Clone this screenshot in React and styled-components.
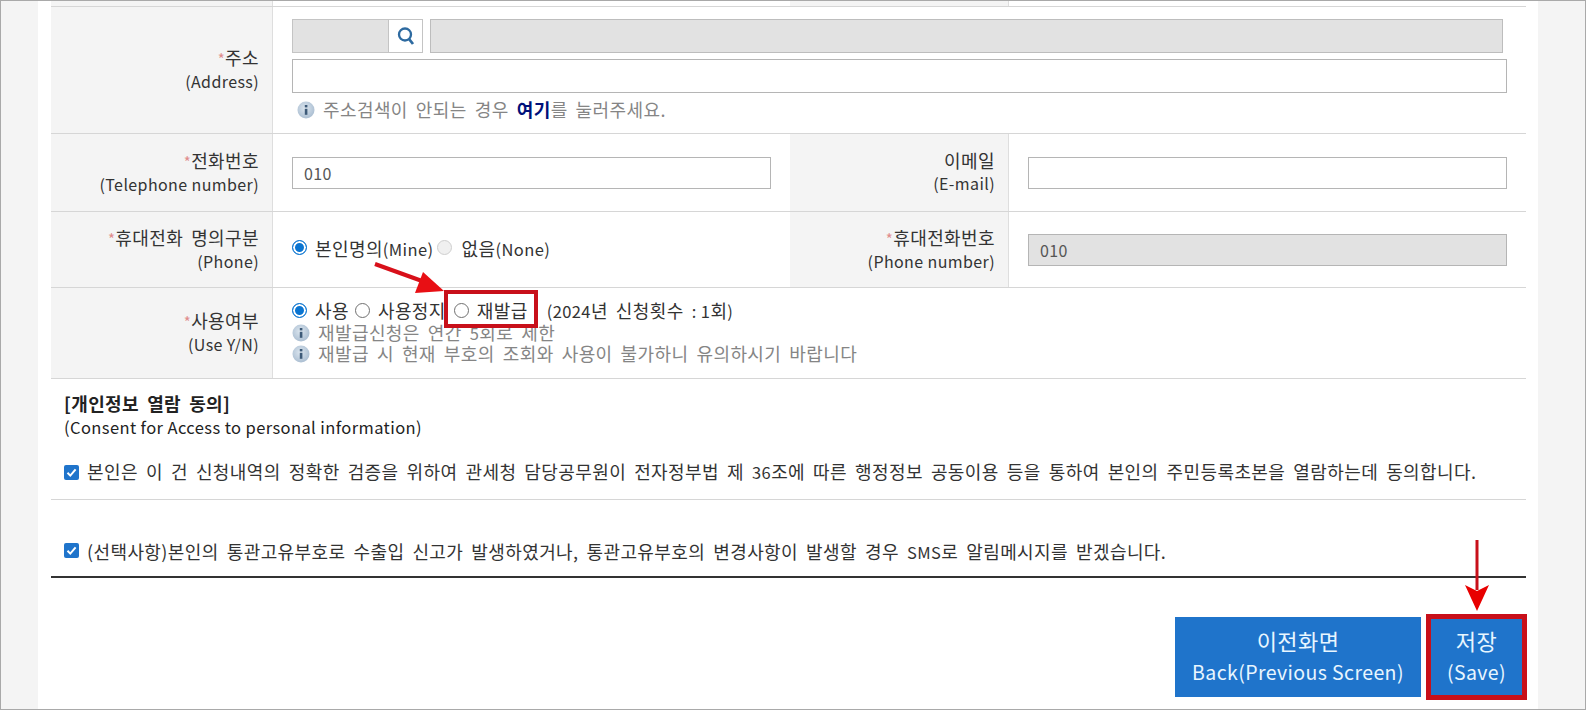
import React from "react";
import styled, { createGlobalStyle } from "styled-components";

const GlobalStyle = createGlobalStyle`
  html, body { margin: 0; padding: 0; background: #f4f4f4; }
  body { font-family: "Noto Sans CJK KR", "Noto Sans", sans-serif; }
`;

const Page = styled.div`
  position: relative;
  width: 1586px;
  height: 710px;
  overflow: hidden;
  box-sizing: border-box;
  padding-left: 37px;
  border: 1px solid #a9a9a9;
  background: #f4f4f4;
`;

const Sheet = styled.div`
  width: 1500px;
  height: 100%;
  padding: 0 12px 0 13px;
  box-sizing: border-box;
  background: #fff;
  font-size: 18px;
  letter-spacing: 0.4px;
  word-spacing: 3.6px;
  color: #333;
`;

const Row = styled.div`
  display: grid;
  grid-template-columns: 222px 517px 219px 517px;
  height: ${(p) => p.$h}px;
  border-bottom: 1px solid #d6d6d6;
  box-sizing: border-box;
`;

const Label = styled.div`
  background: #f4f4f4;
  display: flex;
  flex-direction: column;
  justify-content: center;
  align-items: flex-end;
  padding: 0 13px 1px 0;
  line-height: 23px;
  color: #333;
  border-right: 1px solid #dedede;
  box-sizing: border-box;
  white-space: nowrap;
`;

const Star = styled.span`
  color: #e08c8c;
  font-size: 15px;
  word-spacing: 0;
`;

const En = styled.span`
  font-size: ${(p) => p.$size || 16.5}px;
  word-spacing: 0;
`;

const Cell = styled.div`
  grid-column: ${(p) => p.$span || "auto"};
  display: flex;
  flex-direction: column;
  justify-content: ${(p) => (p.$top ? "flex-start" : "center")};
  padding: ${(p) => (p.$top ? "12px" : "0")} 19px ${(p) => p.$pb || 0}px;
  box-sizing: border-box;
  min-width: 0;
`;

const TextBox = styled.div`
  height: ${(p) => p.$h || 32}px;
  margin-top: ${(p) => p.$mt || 0}px;
  box-sizing: border-box;
  border: 1px solid #b5b5b5;
  background: ${(p) => (p.$off ? "#e2e2e2" : "#fff")};
  display: flex;
  align-items: center;
  padding-left: 11px;
  font-size: 16px;
  color: #555;
`;

const AddrLine = styled.div`
  display: flex;
  height: 34px;
  gap: 7px;
  margin-right: 4px;
`;

const Zip = styled.div`
  width: 131px;
  display: flex;
  border: 1px solid #c4c4c4;
  box-sizing: border-box;
`;

const ZipField = styled.div`
  flex: 1;
  background: #e2e2e2;
`;

const ZipBtn = styled.div`
  width: 33px;
  display: flex;
  align-items: center;
  justify-content: center;
  background: #fff;
  border-left: 1px solid #c4c4c4;
`;

const AddrField = styled.div`
  flex: 1;
  background: #e2e2e2;
  border: 1px solid #bdbdbd;
`;

const Hint = styled.div`
  display: flex;
  align-items: center;
  gap: 8px;
  color: #858585;
  line-height: 21px;
  height: 21px;
  white-space: nowrap;
  margin-top: ${(p) => p.$mt || 0}px;
  margin-left: ${(p) => p.$indent || 0}px;
`;

const Strong = styled.b`
  color: #00107a;
`;

const Options = styled.div`
  display: flex;
  align-items: center;
  height: 24px;
  white-space: nowrap;
`;

const Radio = styled.span`
  width: 15px;
  height: 15px;
  border-radius: 50%;
  box-sizing: border-box;
  flex: none;
  background: ${(p) => (p.$on ? "#0b75d1" : p.$dim ? "#f0f0f0" : "#fff")};
  margin-right: ${(p) => p.$mr || 8}px;
  border: ${(p) => (p.$on ? "1.5px solid #0b75d1" : `1px solid ${p.$dim ? "#cfcfcf" : "#707070"}`)};
  box-shadow: ${(p) => (p.$on ? "inset 0 0 0 2px #fff" : "none")};
`;

const Choice = styled.span`
  margin-right: ${(p) => p.$mr || 6}px;
  margin-left: ${(p) => p.$ml || 0}px;
`;

const Highlight = styled.div`
  position: relative;
  display: flex;
  align-items: center;
  margin-left: 2px;
`;

const Frame = styled.span`
  position: absolute;
  box-sizing: border-box;
  border: ${(p) => p.$t}px solid #c8101a;
  inset: ${(p) => p.$inset};
  pointer-events: none;
`;

const Consent = styled.div`
  padding: 13px 13px 0;
  color: #222;
  line-height: 23px;
  height: 121px;
  box-sizing: border-box;
  border-bottom: 1px solid #d6d6d6;
`;

const CheckLine = styled.div`
  display: flex;
  align-items: center;
  gap: 8px;
  color: #333;
  white-space: nowrap;
  margin-top: ${(p) => p.$mt || 0}px;
`;

const OptionalRow = styled.div`
  height: 76px;
  box-sizing: border-box;
  padding: 25px 13px 0;
  display: flex;
  align-items: center;
`;

const Check = styled.span`
  width: 15px;
  height: 15px;
  border-radius: 2px;
  background: #1f74cb;
  display: flex;
  align-items: center;
  justify-content: center;
  flex: none;
`;

const Footer = styled.div`
  border-top: 2px solid #333;
  display: flex;
  justify-content: flex-end;
  gap: 10px;
  padding: 39px 4px 0 0;
`;

const Btn = styled.button`
  position: relative;
  width: ${(p) => p.$w}px;
  height: 80px;
  border: 0;
  padding: 0 0 3px;
  background: #1f74cb;
  color: #e8f6ff;
  font-family: inherit;
  font-size: 22px;
  line-height: 30px;
  letter-spacing: 0.4px;
  word-spacing: 4px;
`;

const Arrow = styled.svg`
  position: absolute;
  left: ${(p) => p.$x}px;
  top: ${(p) => p.$y}px;
  overflow: visible;
`;

const InfoIcon = styled.svg`
  flex: none;
`;

const Info = () => (
  <InfoIcon width="18" height="18" viewBox="0 0 18 18">
    <defs>
      <radialGradient id="infoFill" cx="0.45" cy="0.4" r="0.7">
        <stop offset="0" stopColor="#dce6ef" />
        <stop offset="1" stopColor="#a3b8cd" />
      </radialGradient>
    </defs>
    <circle cx="9" cy="9" r="8.5" fill="url(#infoFill)" />
    <rect x="7.8" y="7.8" width="2.6" height="6" fill="#3d5a78" />
    <rect x="7.8" y="4" width="2.6" height="2.4" fill="#3d5a78" />
  </InfoIcon>
);

const Tick = () => (
  <svg width="11" height="11" viewBox="0 0 11 11">
    <path d="M1.5 5.8 L4.3 8.6 L9.6 2.4" stroke="#fff" strokeWidth="2" fill="none" />
  </svg>
);

export default function App() {
  return (
    <>
      <GlobalStyle />
      <Page>
        <Sheet>
          <Row $h={6}>
            <Label />
            <Cell />
            <Label />
            <Cell />
          </Row>
          <Row $h={127}>
            <Label>
              <div><Star>*</Star>주소</div>
              <En $size={16}>(Address)</En>
            </Label>
            <Cell $span="2 / 5" $top>
              <AddrLine>
                <Zip>
                  <ZipField />
                  <ZipBtn>
                    <svg width="20" height="20" viewBox="0 0 20 20">
                      <circle cx="9" cy="8.5" r="6" stroke="#2d6aa0" strokeWidth="2.3" fill="none" />
                      <path d="M13 13 L17 18" stroke="#2d6aa0" strokeWidth="2.8" />
                    </svg>
                  </ZipBtn>
                </Zip>
                <AddrField />
              </AddrLine>
              <TextBox $h={34} $mt={6} />
              <Hint $indent={5} $mt={6}>
                <Info />
                <span>주소검색이 안되는 경우 <Strong>여기</Strong>를 눌러주세요.</span>
              </Hint>
            </Cell>
          </Row>
          <Row $h={78}>
            <Label>
              <div><Star>*</Star>전화번호</div>
              <En $size={16}>(Telephone number)</En>
            </Label>
            <Cell><TextBox>010</TextBox></Cell>
            <Label>
              <div>이메일</div>
              <En $size={16}>(E-mail)</En>
            </Label>
            <Cell><TextBox /></Cell>
          </Row>
          <Row $h={76}>
            <Label>
              <div><Star>*</Star>휴대전화 명의구분</div>
              <En $size={16}>(Phone)</En>
            </Label>
            <Cell $pb={4}>
              <Options>
                <Radio $on />
                <Choice $mr={3}>본인명의<En>(Mine)</En></Choice>
                <Radio $dim $mr={10} />
                <Choice>없음<En>(None)</En></Choice>
              </Options>
            </Cell>
            <Label>
              <div><Star>*</Star>휴대전화번호</div>
              <En $size={16}>(Phone number)</En>
            </Label>
            <Cell><TextBox $off>010</TextBox></Cell>
          </Row>
          <Row $h={91}>
            <Label>
              <div><Star>*</Star>사용여부</div>
              <En $size={16}>(Use Y/N)</En>
            </Label>
            <Cell $span="2 / 5" $pb={4}>
              <Options>
                <Radio $on />
                <Choice>사용</Choice>
                <Radio />
                <Choice>사용정지</Choice>
                <Highlight>
                  <Radio />
                  <span>재발급</span>
                  <Frame $t={4} $inset="-7px -10px -5px -10px" />
                </Highlight>
                <Choice $ml={19}><En>(2024</En>년 신청횟수 <En>: 1</En>회<En>)</En></Choice>
              </Options>
              <Hint><Info /><span>재발급신청은 연간 <En>5</En>회로 제한</span></Hint>
              <Hint><Info /><span>재발급 시 현재 부호의 조회와 사용이 불가하니 유의하시기 바랍니다</span></Hint>
            </Cell>
          </Row>
          <Consent>
            <b>[개인정보 열람 동의]</b>
            <div><En>(Consent for Access to personal information)</En></div>
            <CheckLine $mt={21}>
              <Check><Tick /></Check>
              <span>본인은 이 건 신청내역의 정확한 검증을 위하여 관세청 담당공무원이 전자정부법 제 <En>36</En>조에 따른 행정정보 공동이용 등을 통하여 본인의 주민등록초본을 열람하는데 동의합니다.</span>
            </CheckLine>
          </Consent>
          <OptionalRow>
            <CheckLine>
              <Check><Tick /></Check>
              <span>(선택사항)본인의 통관고유부호로 수출입 신고가 발생하였거나, 통관고유부호의 변경사항이 발생할 경우 <En>SMS</En>로 알림메시지를 받겠습니다.</span>
            </CheckLine>
          </OptionalRow>
          <Footer>
            <Btn $w={246}>이전화면<br /><En $size={19.5}>Back(Previous Screen)</En></Btn>
            <Btn $w={91}>저장<br /><En $size={19.5}>(Save)</En><Frame $t={5} $inset="-3px -5px -3px -5px" /></Btn>
          </Footer>
        </Sheet>
        <Arrow $x={371} $y={260} width="72" height="32" viewBox="0 0 72 32">
          <path d="M3 3 L50 20" stroke="#d8101a" strokeWidth="4" />
          <path d="M51 11 L72 30 L43 32 Z" fill="#e80f14" />
        </Arrow>
        <Arrow $x={1464} $y={539} width="24" height="72" viewBox="0 0 24 72">
          <path d="M12 0 V50" stroke="#c8101a" strokeWidth="3" />
          <path d="M0 45 L12 51 L24 45 L12 71 Z" fill="#e80000" />
        </Arrow>
      </Page>
    </>
  );
}
